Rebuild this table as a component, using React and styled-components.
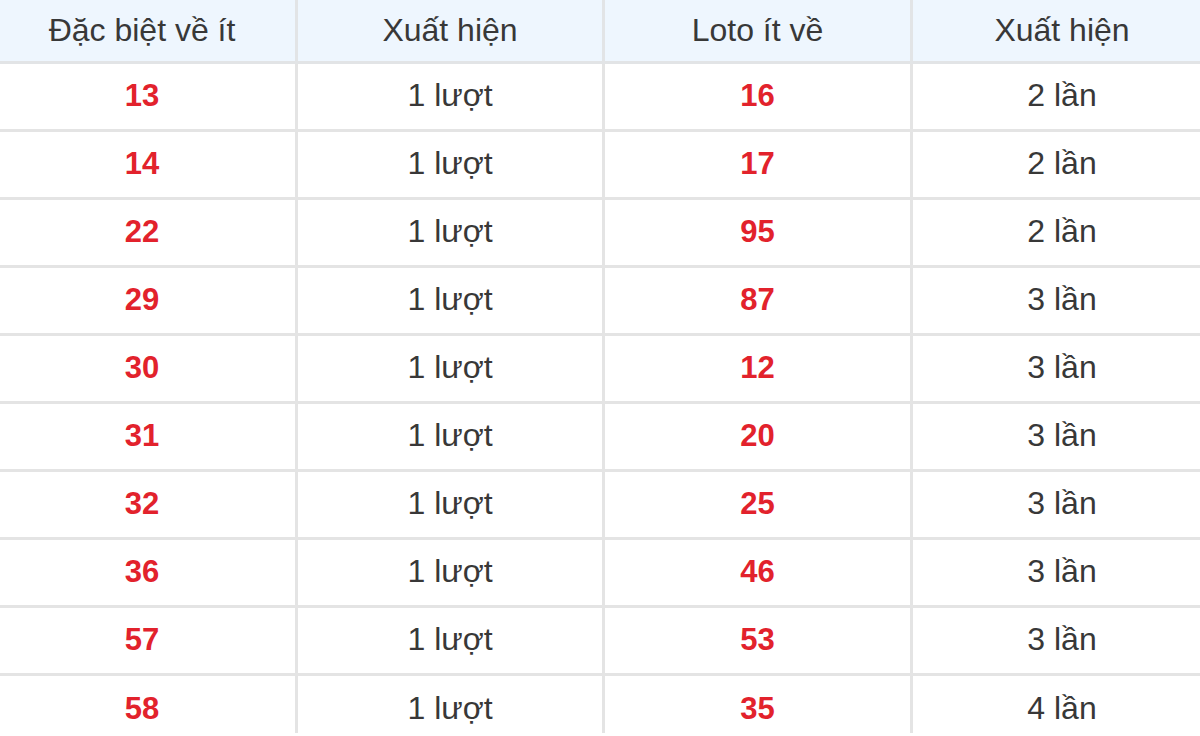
import styled, { createGlobalStyle } from "styled-components";

const GlobalStyle = createGlobalStyle`
  html, body {
    margin: 0;
    padding: 0;
    background: #ffffff;
    overflow: hidden;
  }
  body {
    font-family: "Liberation Sans", Arial, sans-serif;
  }
`;

const Wrapper = styled.div`
  width: 1200px;
  height: 736px;
  overflow: hidden;
`;

const Table = styled.div`
  display: grid;
  grid-template-columns: 309px 307px 308px 1fr;
  width: 1222px;
  margin-left: -11px;
`;

const HeadCell = styled.div`
  box-sizing: border-box;
  height: 64px;
  display: flex;
  align-items: center;
  justify-content: center;
  background: #eef6fe;
  border-bottom: 3px solid #e2e4e6;
  border-right: ${(p) => (p.$last ? "none" : "3px solid #e2e4e6")};
  color: #383838;
  font-size: 32px;
  font-weight: 400;
`;

const Cell = styled.div`
  box-sizing: border-box;
  height: ${(p) => (p.$bottom ? "57px" : "68px")};
  display: flex;
  align-items: center;
  justify-content: center;
  padding: ${(p) => (p.$bottom ? "8px 0 0" : "0 0 2px")};
  border-bottom: ${(p) => (p.$bottom ? "none" : "3px solid #e4e4e4")};
  border-right: ${(p) => (p.$last ? "none" : "3px solid #e4e4e4")};
  color: ${(p) => (p.$red ? "#e2222c" : "#383838")};
  font-size: ${(p) => (p.$red ? "31px" : "32px")};
  font-weight: ${(p) => (p.$red ? 700 : 400)};
`;

const headers = ["Đặc biệt về ít", "Xuất hiện", "Loto ít về", "Xuất hiện"];

const rows = [
  ["13", "1 lượt", "16", "2 lần"],
  ["14", "1 lượt", "17", "2 lần"],
  ["22", "1 lượt", "95", "2 lần"],
  ["29", "1 lượt", "87", "3 lần"],
  ["30", "1 lượt", "12", "3 lần"],
  ["31", "1 lượt", "20", "3 lần"],
  ["32", "1 lượt", "25", "3 lần"],
  ["36", "1 lượt", "46", "3 lần"],
  ["57", "1 lượt", "53", "3 lần"],
  ["58", "1 lượt", "35", "4 lần"],
];

export default function App() {
  return (
    <Wrapper>
      <GlobalStyle />
      <Table>
        {headers.map((h, i) => (
          <HeadCell key={"h" + i} $last={i === 3}>
            {h}
          </HeadCell>
        ))}
        {rows.map((r, ri) =>
          r.map((c, ci) => (
            <Cell
              key={ri + "-" + ci}
              $red={ci % 2 === 0}
              $last={ci === 3}
              $bottom={ri === rows.length - 1}
            >
              {c}
            </Cell>
          ))
        )}
      </Table>
    </Wrapper>
  );
}
